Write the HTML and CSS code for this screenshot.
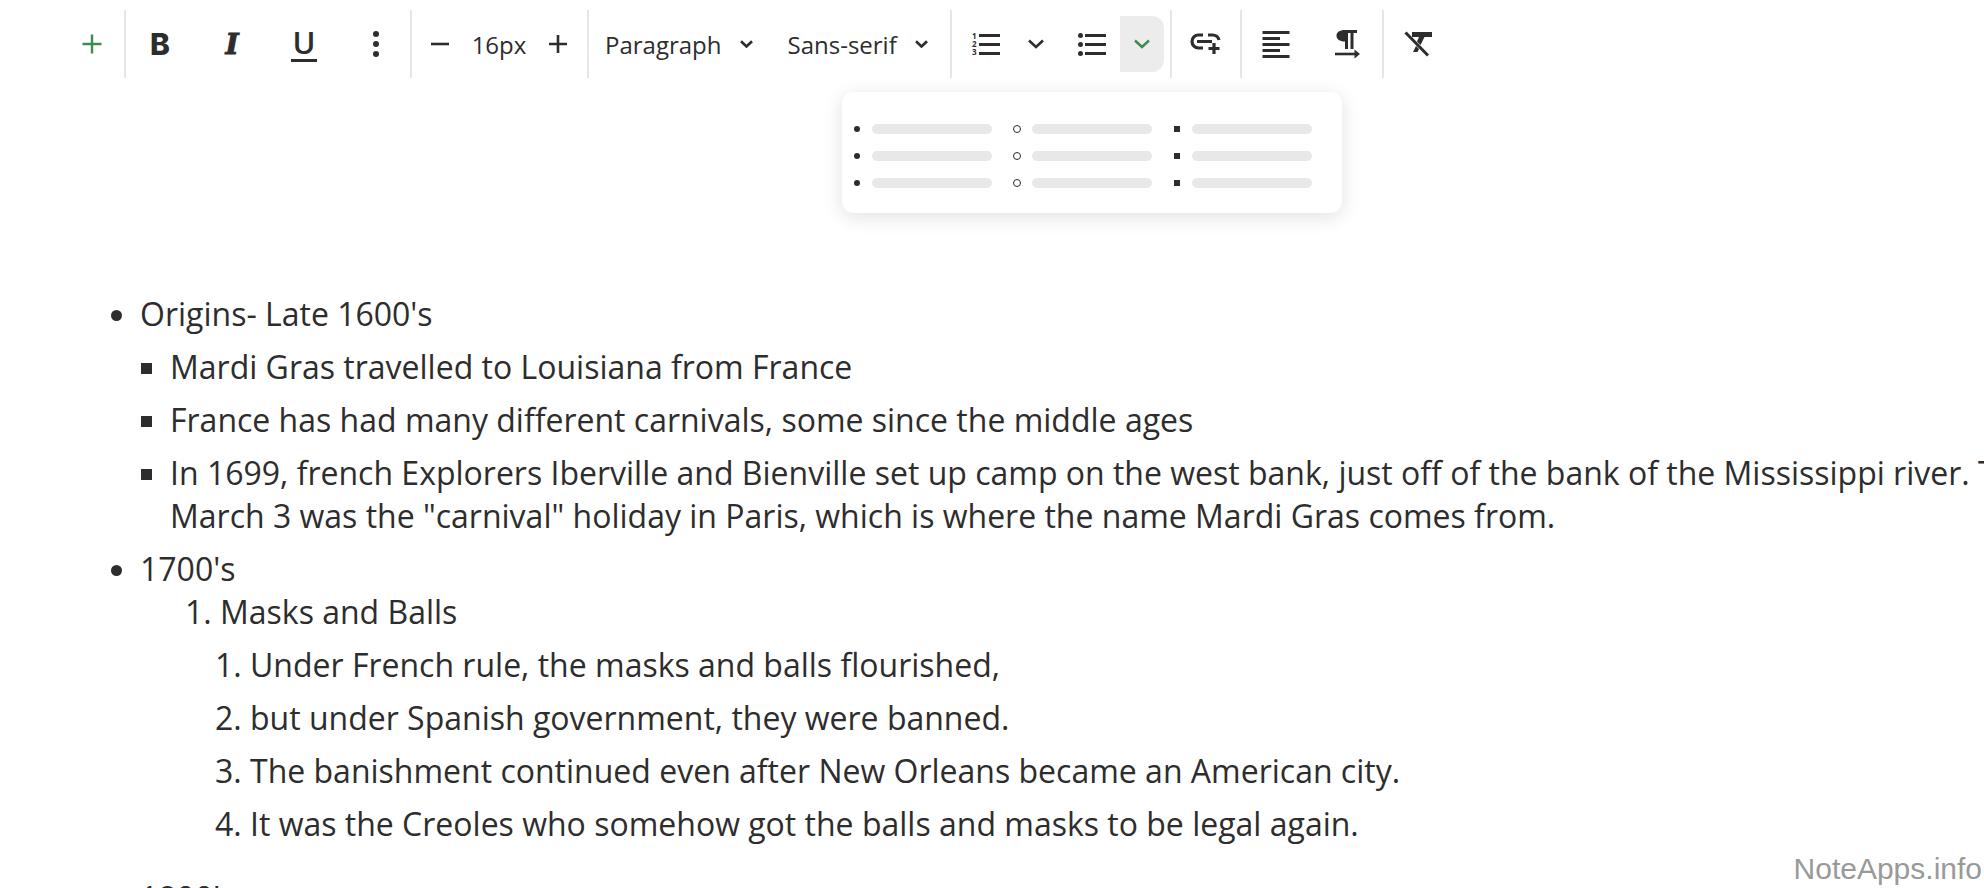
FILE: index.html
```html
<!DOCTYPE html>
<html lang="en">
<head>
    <meta charset="UTF-8">
    <title>Note editor</title>
    <link rel="stylesheet" href="styles.css">
</head>
<body>
    <div class="toolbar">
        <div class="group group-first">
            <button class="tb-btn"><svg width="20" height="20" viewBox="0 0 20 20"><path class="green" d="M10 0.5V19.5M0.5 10H19.5"/></svg></button>
        </div>
        <span class="sep"></span>
        <div class="group">
            <button class="tb-btn glyph-b">B</button>
            <button class="tb-btn glyph-i">I</button>
            <button class="tb-btn glyph-u"><span>U</span></button>
            <button class="tb-btn"><svg width="6" height="26" viewBox="0 0 6 26"><circle cx="3" cy="3" r="3"/><circle cx="3" cy="13" r="3"/><circle cx="3" cy="23" r="3"/></svg></button>
        </div>
        <span class="sep"></span>
        <div class="group group-size">
            <button class="tb-btn"><svg width="20" height="4" viewBox="0 0 20 4"><path class="line" d="M1 2H19"/></svg></button>
            <span class="size-value">16px</span>
            <button class="tb-btn"><svg width="20" height="20" viewBox="0 0 20 20"><path class="line" d="M10 1V19M1 10H19"/></svg></button>
        </div>
        <span class="sep"></span>
        <div class="group group-selects">
            <button class="select-btn select-para">Paragraph
                <svg width="13" height="8" viewBox="0 0 13 8"><path class="line" d="M1 1.2L6.5 6.5L12 1.2"/></svg>
            </button>
            <button class="select-btn">Sans-serif
                <svg width="13" height="8" viewBox="0 0 13 8"><path class="line" d="M1 1.2L6.5 6.5L12 1.2"/></svg>
            </button>
        </div>
        <span class="sep"></span>
        <div class="group group-lists">
            <div class="split">
                <button class="tb-btn">
                    <svg width="30" height="24" viewBox="0 0 30 24">
                        <text class="mini-num" x="1" y="7">1</text>
                        <text class="mini-num" x="1" y="15">2</text>
                        <text class="mini-num" x="1" y="23">3</text>
                        <path class="line heavy" d="M8 3.5H29M8 12.5H29M8 21.5H29"/>
                    </svg>
                </button>
                <button class="tb-caret"><svg width="16" height="10" viewBox="0 0 16 10"><path class="line" d="M1 1.5L8 8L15 1.5"/></svg></button>
            </div>
            <div class="split">
                <button class="tb-btn">
                    <svg width="28" height="24" viewBox="0 0 28 24">
                        <circle cx="2.5" cy="3.5" r="2.5"/><circle cx="2.5" cy="12.5" r="2.5"/><circle cx="2.5" cy="21.5" r="2.5"/>
                        <path class="line heavy" d="M7 3.5H28M7 12.5H28M7 21.5H28"/>
                    </svg>
                </button>
                <button class="tb-caret is-open"><svg width="16" height="10" viewBox="0 0 16 10"><path class="green" d="M1 1.5L8 8L15 1.5"/></svg></button>
            </div>
        </div>
        <span class="sep"></span>
        <div class="group">
            <button class="tb-btn">
                <svg width="32" height="22" viewBox="0 0 32 22"><path class="line heavy" d="M13 2H8.500A6.500 6.500 0 0 0 8.500 15H13M7 8.500H22M18 2H22.500A6.500 6.500 0 0 1 29 7M24 10V21M18.500 15.500H29.500"/></svg>
            </button>
        </div>
        <span class="sep"></span>
        <div class="group">
            <button class="tb-btn">
                <svg width="28" height="28" viewBox="0 0 28 28"><path class="line heavy" d="M0.500 2.500H27.500M0.500 8.500H18M0.500 14.500H27.500M0.500 20.500H18M0.500 26.500H27.500"/></svg>
            </button>
            <button class="tb-btn">
                <svg width="25" height="30" viewBox="0 0 25 30">
                    <path class="fill-icon" d="M10 1H22V4H18.500V20H15.500V4H13V20H10V12.500C4.500 12.500 1.500 10 1.500 6.700C1.500 3.300 4.500 1 10 1Z"/>
                    <path class="line" d="M0 25H21"/>
                    <path class="fill-icon" d="M19.500 20.500L25 25L19.500 29.500Z"/>
                </svg>
            </button>
        </div>
        <span class="sep"></span>
        <div class="group">
            <button class="tb-btn">
                <svg width="28" height="26" viewBox="0 0 28 26">
                    <path class="fill-icon" d="M8 1H28V6H20.500L16.500 14L13 10.500L15 6H8Z"/>
                    <path class="fill-icon" d="M12 15L15 18L13.500 21H9Z"/>
                    <path class="slash" d="M1.500 1.500L24 24.500"/>
                </svg>
            </button>
        </div>

        <div class="list-menu">
            <div class="menu-col">
                <div class="menu-row"><i class="mark mark-disc"></i><i class="bar"></i></div>
                <div class="menu-row"><i class="mark mark-disc"></i><i class="bar"></i></div>
                <div class="menu-row"><i class="mark mark-disc"></i><i class="bar"></i></div>
            </div>
            <div class="menu-col">
                <div class="menu-row"><i class="mark mark-circle"></i><i class="bar"></i></div>
                <div class="menu-row"><i class="mark mark-circle"></i><i class="bar"></i></div>
                <div class="menu-row"><i class="mark mark-circle"></i><i class="bar"></i></div>
            </div>
            <div class="menu-col">
                <div class="menu-row"><i class="mark mark-square"></i><i class="bar"></i></div>
                <div class="menu-row"><i class="mark mark-square"></i><i class="bar"></i></div>
                <div class="menu-row"><i class="mark mark-square"></i><i class="bar"></i></div>
            </div>
        </div>
    </div>

    <ul class="note">
        <li>Origins- Late 1600's
            <ul class="sub-list">
                <li>Mardi Gras travelled to Louisiana from France</li>
                <li>France has had many different carnivals, some since the middle ages</li>
                <li>In 1699, french Explorers Iberville and Bienville set up camp on the west bank, just off of the bank of the Mississippi river. T<br>March 3 was the "carnival" holiday in Paris, which is where the name Mardi Gras comes from.</li>
            </ul>
        </li>
        <li>1700's
            <ol class="num-list">
                <li>Masks and Balls
                    <ol class="num-sub">
                        <li>Under French rule, the masks and balls flourished,</li>
                        <li>but under Spanish government, they were banned.</li>
                        <li>The banishment continued even after New Orleans became an American city.</li>
                        <li>It was the Creoles who somehow got the balls and masks to be legal again.</li>
                    </ol>
                </li>
            </ol>
        </li>
        <li class="later">1800's</li>
    </ul>

    <div class="watermark">NoteApps.info</div>
</body>
</html>
```

FILE: styles.css
```css
html, body {
    margin: 0;
    height: 888px;
    overflow: hidden;
}

body {
    position: relative;
    background-color: #ffffff;
    color: #2d2d2d;
    font-family: "Open Sans", sans-serif;
}

button {
    border: none;
    background: none;
    padding: 0;
    color: inherit;
    font-family: inherit;
    cursor: pointer;
}

svg {
    display: block;
    fill: #2d2d2d;
}

.line,
.green,
.slash {
    fill: none;
    stroke: #2d2d2d;
    stroke-width: 3;
}

.line {
    stroke-width: 2.6;
}

.line.heavy {
    stroke-width: 3.2;
}

.green {
    stroke: #3f8a50;
    stroke-width: 2.4;
}

.fill-icon {
    fill: #2d2d2d;
}

.mini-num {
    font-family: "Open Sans", sans-serif;
    font-size: 8px;
    font-weight: 700;
}

/* toolbar */
.toolbar {
    position: relative;
    display: flex;
    align-items: center;
    height: 88px;
}

.group {
    display: flex;
    align-items: center;
    gap: 16px;
    padding: 0 6px;
}

.group-first {
    padding: 0 4px 0 64px;
}

.group-size {
    gap: 0;
    padding: 0 1px 0 0;
}

.group-selects {
    gap: 35px;
    padding: 0 22px 0 16px;
}

.group-lists {
    gap: 6px;
}

.sep {
    flex: none;
    width: 2px;
    height: 68px;
    background-color: #e6e6e6;
}

.tb-btn {
    display: flex;
    align-items: center;
    justify-content: center;
    width: 56px;
    height: 56px;
}

.tb-caret {
    display: flex;
    align-items: center;
    justify-content: center;
    width: 44px;
    height: 56px;
}

.tb-caret.is-open {
    background-color: #ececec;
    border-radius: 0 12px 12px 0;
}

.split {
    display: flex;
}

.glyph-b {
    font-family: Inter, sans-serif;
    font-size: 30px;
    font-weight: 800;
}

.glyph-i {
    font-family: "DejaVu Serif", serif;
    font-size: 28px;
    font-weight: 700;
    font-style: italic;
    -webkit-text-stroke: 1px #2d2d2d;
}

.glyph-u {
    font-size: 31px;
    font-weight: 600;
}

.glyph-u span {
    border-bottom: 3px solid #2d2d2d;
    line-height: 30px;
    padding: 0 1px 2px;
}

.size-value {
    width: 62px;
    text-align: center;
    font-size: 24px;
}

.select-btn {
    display: flex;
    align-items: center;
    gap: 18px;
    font-size: 24px;
}

/* list style dropdown */
.list-menu {
    position: absolute;
    left: 842px;
    top: 92px;
    display: flex;
    gap: 22px;
    padding: 32px 30px 25px 12px;
    background-color: #ffffff;
    border-radius: 12px;
    box-shadow: 0 4px 20px rgba(0, 0, 0, 0.12);
}

.menu-col {
    display: flex;
    flex-direction: column;
    gap: 17px;
}

.menu-row {
    display: flex;
    align-items: center;
    gap: 12px;
}

.mark {
    display: block;
    width: 6px;
    height: 6px;
    box-sizing: border-box;
}

.mark-disc {
    background-color: #2d2d2d;
    border-radius: 50%;
}

.mark-circle {
    width: 8px;
    height: 8px;
    margin: 0 -1px;
    border: 1.4px solid #2d2d2d;
    border-radius: 50%;
}

.mark-square {
    background-color: #2d2d2d;
}

.bar {
    display: block;
    width: 120px;
    height: 10px;
    background-color: #e8e8e8;
    border-radius: 5px;
}

/* note content */
.note {
    margin: 204px 0 0;
    padding: 0 0 0 140px;
    font-size: 32px;
    line-height: 43px;
    white-space: nowrap;
}

.note ul,
.note ol {
    margin: 0;
}

.sub-list {
    padding-left: 30px;
    list-style: square;
}

.num-list {
    padding-left: 80px;
}

.num-sub {
    padding-left: 30px;
}

.sub-list > li,
.num-sub > li {
    margin-top: 10px;
}

.note > li {
    margin-top: 10px;
}

.note > li:first-child {
    margin-top: 0;
}

.note > li.later {
    margin-top: 31px;
}

.watermark {
    position: absolute;
    right: 2px;
    bottom: 0;
    font-family: "Liberation Sans", sans-serif;
    font-size: 30px;
    line-height: 38px;
    color: #999999;
}
```
